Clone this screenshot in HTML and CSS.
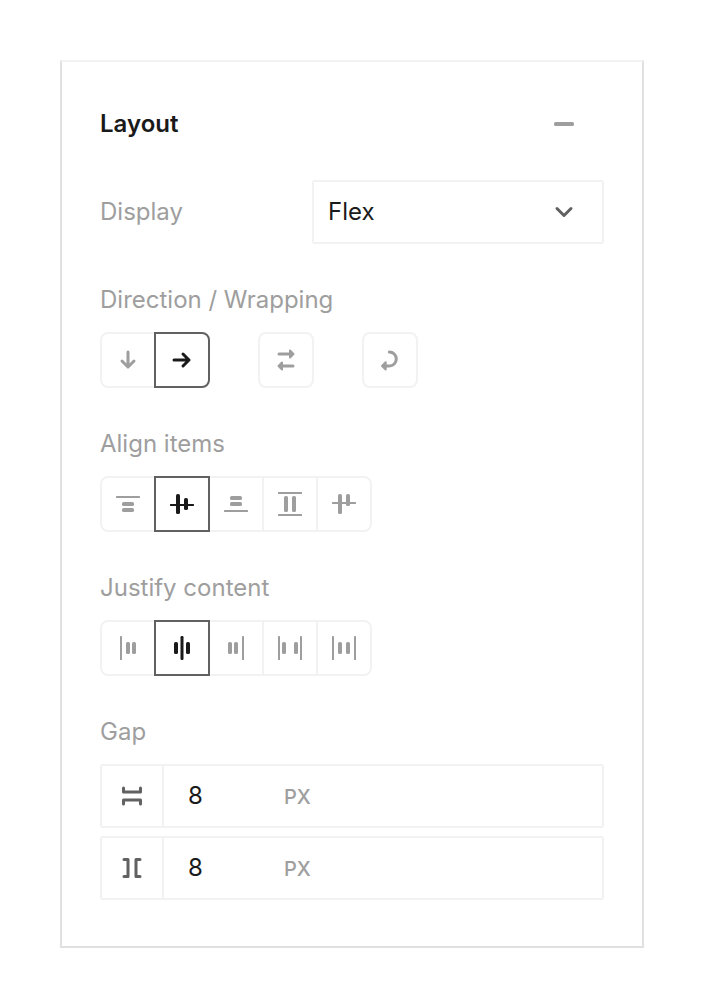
FILE: index.html
```html
<!DOCTYPE html>
<html lang="en">
<head>
<meta charset="utf-8">
<meta name="viewport" content="width=device-width, initial-scale=1">
<title>Layout</title>
<link rel="stylesheet" href="styles.css">
</head>
<body>
<main class="panel">
  <header class="panel-header">
    <h1 class="panel-title">Layout</h1>
    <button class="collapse" type="button" aria-label="Collapse section">
      <svg class="icon" viewBox="0 0 32 32"><rect class="fill" x="6" y="14" width="20" height="4" rx="1.5"/></svg>
    </button>
  </header>

  <div class="display-row">
    <label class="label" for="display">Display</label>
    <div class="select-wrap">
      <select class="select" id="display">
        <option selected>Flex</option>
        <option>Block</option>
        <option>Grid</option>
      </select>
      <svg class="icon chevron" viewBox="0 0 32 32" aria-hidden="true"><path class="line" d="M9 12.5l7 7 7-7"/></svg>
    </div>
  </div>

  <section class="field">
    <h2 class="label" id="direction">Direction / Wrapping</h2>
    <div class="button-sets" role="group" aria-labelledby="direction">
      <div class="segments">
        <button class="segment" type="button" aria-pressed="false" aria-label="Column">
          <svg class="icon" viewBox="0 0 32 32"><path class="line" d="M16 8v15M10 17l6 6 6-6"/></svg>
        </button>
        <button class="segment" type="button" aria-pressed="true" aria-label="Row">
          <svg class="icon" viewBox="0 0 32 32"><path class="line" d="M8 16h15M17 10l6 6-6 6"/></svg>
        </button>
      </div>
      <div class="segments">
        <button class="segment" type="button" aria-pressed="false" aria-label="Reverse">
          <svg class="icon" viewBox="0 0 32 32"><path class="line" d="M9 10h12M11 22h12"/><path class="head" d="M20 6.500v7l3.500-3.500zM12 18.500v7L8.500 22z"/></svg>
        </button>
      </div>
      <div class="segments">
        <button class="segment" type="button" aria-pressed="false" aria-label="Wrap">
          <svg class="icon" viewBox="0 0 32 32"><path class="line" d="M15.300 8a7 7 0 0 1 0 14H11"/><path class="head" d="M11.700 18.200v7.400L8 22z"/></svg>
        </button>
      </div>
    </div>
  </section>

  <section class="field">
    <h2 class="label" id="align">Align items</h2>
    <div class="segments" role="group" aria-labelledby="align">
      <button class="segment" type="button" aria-pressed="false" aria-label="Start">
        <svg class="icon" viewBox="0 0 32 32"><rect class="fill" x="4" y="8" width="24" height="2" rx=".5"/><rect class="fill" x="10" y="14" width="12" height="4" rx="1.600"/><rect class="fill" x="10" y="20" width="12" height="4" rx="1.600"/></svg>
      </button>
      <button class="segment" type="button" aria-pressed="true" aria-label="Center">
        <svg class="icon" viewBox="0 0 32 32"><rect class="fill" x="4" y="16" width="24" height="2" rx=".5"/><rect class="fill" x="10" y="6" width="4" height="20" rx="1.600"/><rect class="fill" x="18" y="10" width="4" height="12" rx="1.600"/></svg>
      </button>
      <button class="segment" type="button" aria-pressed="false" aria-label="End">
        <svg class="icon" viewBox="0 0 32 32"><rect class="fill" x="10" y="8" width="12" height="4" rx="1.600"/><rect class="fill" x="10" y="14" width="12" height="4" rx="1.600"/><rect class="fill" x="4" y="22" width="24" height="2" rx=".5"/></svg>
      </button>
      <button class="segment" type="button" aria-pressed="false" aria-label="Stretch">
        <svg class="icon" viewBox="0 0 32 32"><rect class="fill" x="4" y="4" width="24" height="2" rx=".5"/><rect class="fill" x="10" y="8" width="4" height="16" rx="1.600"/><rect class="fill" x="18" y="8" width="4" height="16" rx="1.600"/><rect class="fill" x="4" y="26" width="24" height="2" rx=".5"/></svg>
      </button>
      <button class="segment" type="button" aria-pressed="false" aria-label="Baseline">
        <svg class="icon" viewBox="0 0 32 32"><rect class="fill" x="4" y="14" width="24" height="2" rx=".5"/><rect class="fill" x="10" y="6" width="4" height="20" rx="1.600"/><rect class="fill" x="18" y="6" width="4" height="12" rx="1.600"/></svg>
      </button>
    </div>
  </section>

  <section class="field">
    <h2 class="label" id="justify">Justify content</h2>
    <div class="segments" role="group" aria-labelledby="justify">
      <button class="segment" type="button" aria-pressed="false" aria-label="Start">
        <svg class="icon" viewBox="0 0 32 32"><rect class="fill" x="8" y="4" width="2" height="24" rx=".5"/><rect class="fill" x="14" y="10" width="4" height="12" rx="1.600"/><rect class="fill" x="20" y="10" width="4" height="12" rx="1.600"/></svg>
      </button>
      <button class="segment" type="button" aria-pressed="true" aria-label="Center">
        <svg class="icon" viewBox="0 0 32 32"><rect class="fill" x="8" y="10" width="4" height="12" rx="1.600"/><rect class="fill" x="14.500" y="4" width="3" height="24" rx="1.200"/><rect class="fill" x="20" y="10" width="4" height="12" rx="1.600"/></svg>
      </button>
      <button class="segment" type="button" aria-pressed="false" aria-label="End">
        <svg class="icon" viewBox="0 0 32 32"><rect class="fill" x="8" y="10" width="4" height="12" rx="1.600"/><rect class="fill" x="14" y="10" width="4" height="12" rx="1.600"/><rect class="fill" x="22" y="4" width="2" height="24" rx=".5"/></svg>
      </button>
      <button class="segment" type="button" aria-pressed="false" aria-label="Space between">
        <svg class="icon" viewBox="0 0 32 32"><rect class="fill" x="4" y="4" width="2" height="24" rx=".5"/><rect class="fill" x="8" y="10" width="4" height="12" rx="1.600"/><rect class="fill" x="20" y="10" width="4" height="12" rx="1.600"/><rect class="fill" x="26" y="4" width="2" height="24" rx=".5"/></svg>
      </button>
      <button class="segment" type="button" aria-pressed="false" aria-label="Space around">
        <svg class="icon" viewBox="0 0 32 32"><rect class="fill" x="4" y="4" width="2" height="24" rx=".5"/><rect class="fill" x="10" y="10" width="4" height="12" rx="1.600"/><rect class="fill" x="18" y="10" width="4" height="12" rx="1.600"/><rect class="fill" x="26" y="4" width="2" height="24" rx=".5"/></svg>
      </button>
    </div>
  </section>

  <section class="field">
    <h2 class="label">Gap</h2>
    <div class="gap-list">
      <div class="gap-row">
        <label class="gap-icon" for="row-gap" aria-label="Row gap">
          <svg class="icon" viewBox="0 0 32 32"><path class="line" d="M7.500 8v4h17V8M7.500 24v-4h17v4"/></svg>
        </label>
        <input class="gap-input" id="row-gap" type="text" inputmode="numeric" value="8">
        <span class="unit">PX</span>
      </div>
      <div class="gap-row">
        <label class="gap-icon" for="column-gap" aria-label="Column gap">
          <svg class="icon" viewBox="0 0 32 32"><path class="line" d="M8 7.500h4v17H8M24 7.500h-4v17h4"/></svg>
        </label>
        <input class="gap-input" id="column-gap" type="text" inputmode="numeric" value="8">
        <span class="unit">PX</span>
      </div>
    </div>
  </section>
</main>
</body>
</html>
```

FILE: styles.css
```css
:root {
  --ink: #1a1a1a;
  --muted: #9e9e9e;
  --strong: #616161;
  --line: #f2f2f2;
  --frame: #e0e0e0;
}

* {
  box-sizing: border-box;
}

body {
  margin: 60px;
  background: #fff;
  color: var(--ink);
  font: 400 24px/32px Inter, "Liberation Sans", sans-serif;
}

button,
input,
select {
  margin: 0;
  padding: 0;
  border: 0;
  background: none;
  color: inherit;
  font: inherit;
}

.panel {
  padding: 30px 38px 46px;
  border: 2px solid var(--frame);
  border-top-color: var(--line);
}

.panel-header {
  display: flex;
  align-items: center;
  justify-content: space-between;
  height: 64px;
  margin-bottom: 24px;
  padding-right: 24px;
}

.panel-title {
  margin: 0;
  font-size: 24px;
  font-weight: 600;
}

.collapse {
  display: flex;
  color: var(--muted);
}

.icon {
  display: block;
  width: 32px;
  height: 32px;
}

.fill {
  fill: currentColor;
}

.line {
  fill: none;
  stroke: currentColor;
  stroke-width: 3;
  stroke-linecap: round;
  stroke-linejoin: round;
}

.head {
  fill: currentColor;
  stroke: currentColor;
  stroke-width: 2;
  stroke-linejoin: round;
}

.label {
  margin: 0;
  color: var(--muted);
  font-size: 24px;
  font-weight: 400;
}

.display-row {
  display: grid;
  grid-template-columns: 212px 1fr;
  align-items: center;
}

.select-wrap {
  display: grid;
  align-items: center;
}

.select,
.chevron {
  grid-area: 1 / 1;
}

.select {
  width: 100%;
  height: 64px;
  padding: 0 64px 0 14px;
  border: 2px solid var(--line);
  border-radius: 2px;
  appearance: none;
}

.chevron {
  justify-self: end;
  margin-right: 24px;
  color: var(--strong);
  pointer-events: none;
}

.field {
  display: grid;
  gap: 16px;
  margin-top: 40px;
}

.button-sets {
  display: flex;
  flex-wrap: wrap;
  gap: 48px;
}

.segments {
  display: flex;
  isolation: isolate;
}

.segment {
  display: flex;
  align-items: center;
  justify-content: center;
  width: 56px;
  height: 56px;
  border: 2px solid var(--line);
  color: var(--muted);
}

.segment + .segment {
  margin-left: -2px;
}

.segment:first-child {
  border-top-left-radius: 8px;
  border-bottom-left-radius: 8px;
}

.segment:last-child {
  border-top-right-radius: 8px;
  border-bottom-right-radius: 8px;
}

.segment[aria-pressed="true"] {
  z-index: 1;
  border-color: var(--strong);
  color: var(--ink);
}

.gap-list {
  display: grid;
  gap: 8px;
}

.gap-row {
  display: flex;
  align-items: stretch;
  height: 64px;
  border: 2px solid var(--line);
  border-radius: 2px;
}

.gap-icon {
  display: flex;
  align-items: center;
  justify-content: center;
  width: 62px;
  border-right: 2px solid var(--line);
  color: var(--strong);
}

.gap-input {
  width: 120px;
  padding-left: 24px;
}

.unit {
  align-self: center;
  padding-top: 2px;
  color: var(--muted);
  font-size: 20px;
  font-weight: 500;
}
```
